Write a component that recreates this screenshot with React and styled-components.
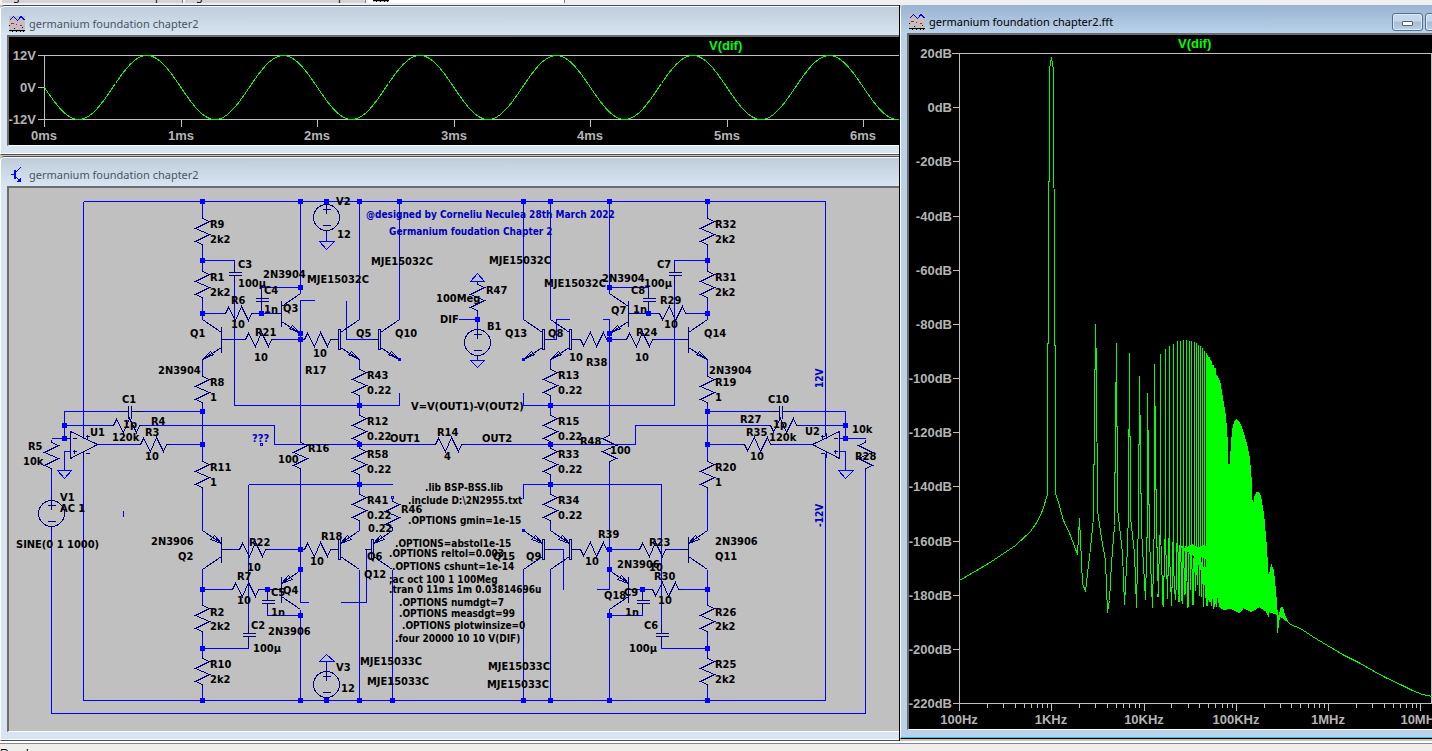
import styled, { createGlobalStyle } from 'styled-components'

const GlobalStyle = createGlobalStyle`
    * {
        box-sizing: border-box;
    }

    body {
        margin: 0;
        background: #f0f0f0;
        font-family: 'Noto Sans', 'Open Sans', sans-serif;
        font-size: 11px;
    }
`

const Screen = styled.div`
    height: 100vh;
    display: flex;
    flex-direction: column;
    overflow: hidden;
`

const TabStrip = styled.nav`
    height: 5px;
    flex: none;
    display: flex;
    align-items: flex-end;
    gap: 2px;
    padding: 0 0 2px 2px;
    overflow: hidden;
    background: #f0f0f0;
`

const Tab = styled.button`
    width: ${(props) => (props.$active ? '197px' : '181px')};
    height: 20px;
    flex: none;
    display: flex;
    align-items: flex-end;
    gap: 6px;
    padding: 0 5px 1px;
    border: 0;
    border-right: 1px solid #808088;
    background: ${(props) => (props.$active ? '#fff' : '#d4d4d4')};
    font: inherit;
    line-height: 12px;
    text-align: left;
    white-space: nowrap;
`

const Desktop = styled.main`
    flex: 1;
    min-height: 0;
    display: grid;
    grid-template-columns: minmax(0, 900fr) minmax(0, 532fr);
    background: #c8c4bc;
`

const Column = styled.div`
    min-width: 0;
    min-height: 0;
    display: flex;
    flex-direction: column;
    gap: 1px;
    border-right: 1px solid #000;
`

const Window = styled.section`
    flex: ${(props) => (props.$grow ? '1' : 'none')};
    min-height: 0;
    display: flex;
    flex-direction: column;
    padding: 0 0 8px 6px;
    background: #d7e4f2;
    border-top: 1px solid #4c4c54;
    border-left: 1px solid #fff;
    border-bottom: 1px solid #4c4c4c;
    border-top-left-radius: 5px;
    box-shadow: inset 0 -1px 0 #fff;
`

const FrontWindow = styled(Window)`
    margin-bottom: 2px;
    background: #b9d1ea;
    border-top: 0;
    border-bottom-color: #000;
    box-shadow: inset 0 -1px 0 #38c0dc;
`

const TitleBar = styled.header`
    height: ${(props) => (props.$front ? '28px' : '29px')};
    flex: none;
    display: flex;
    align-items: center;
    gap: 4px;
    margin-left: -6px;
    padding: 5px 0 0 8px;
    overflow: hidden;
    color: ${(props) => (props.$front ? '#000' : '#4b5563')};
    background: ${(props) =>
        props.$front
            ? 'linear-gradient(#99b4d1, #b9d1ea)'
            : 'linear-gradient(#bfcddb, #d7e4f1)'};
    border-top: ${(props) => (props.$front ? '0' : '1px solid #f4f8fc')};
    border-top-left-radius: 4px;

    & svg {
        flex: none;
    }
`

const Title = styled.h1`
    flex: 1;
    margin: 0;
    font-size: 11px;
    font-weight: 400;
    line-height: 16px;
    white-space: nowrap;
`

const Controls = styled.div`
    display: flex;
    gap: 2px;
    width: 40px;
    overflow: hidden;
`

const ControlButton = styled.button`
    width: 31px;
    height: 18px;
    flex: none;
    display: flex;
    align-items: flex-end;
    justify-content: center;
    padding: 0 0 4px;
    border: 1px solid #566f8c;
    border-radius: 3px;
    background: linear-gradient(#c5d7ea 45%, #a3bbd4 50%, #b9d0e8);
    box-shadow: inset 0 0 0 1px #dbe8f5;
`

const MinimizeMark = styled.span`
    width: 11px;
    height: 5px;
    border: 1px solid #555c70;
    border-radius: 1px;
    background: #fff;
`

const Client = styled.div`
    flex: 1;
    min-height: 0;
    overflow: hidden;
    background: ${(props) => props.$color};
    border: 2px solid #6c6c6c;
    border-width: 2px 0 1px 2px;
    border-bottom-color: #fff;

    & svg {
        display: block;
    }
`

const StatusBar = styled.footer`
    height: 10px;
    flex: none;
    overflow: hidden;
    background: #f0eded;
    border-top: 2px solid #fff;
    font-family: 'Liberation Sans', sans-serif;
    font-size: 12px;
    line-height: 16px;
`

const StatusText = styled.span`
    display: block;
    padding-top: 2px;
    border-top: 1px solid #888;
`

const PlotSvg = styled.svg`
    font-family: 'Liberation Sans', Arial, sans-serif;
    font-size: 13px;
    font-weight: 700;
`

const Axis = styled.path`
    fill: none;
    stroke: #c0c0c0;
    shape-rendering: crispEdges;
`

const Trace = styled.path`
    fill: ${(props) => (props.$solid ? '#0f0' : 'none')};
    stroke: #0f0;
    shape-rendering: crispEdges;
`

const AxisText = styled.text`
    fill: #b4b4b4;
    text-anchor: ${(props) => props.$anchor};
`

const TraceName = styled.text`
    fill: #0f0;
`

const SchematicSvg = styled.svg`
    font-family: 'DejaVu Sans Condensed', 'DejaVu Sans', sans-serif;
    font-weight: 700;
`

const Wires = styled.path`
    fill: none;
    stroke: #00f;
    shape-rendering: crispEdges;
`

const Symbols = styled.g`
    fill: none;
    stroke: #000080;
    shape-rendering: crispEdges;
`

const Junction = styled.rect`
    fill: #00f;
`

const OpenEnd = styled.rect`
    fill: none;
    stroke: #00f;
    shape-rendering: crispEdges;
`

const Label = styled.text`
    font-size: ${(props) => (props.$small ? '10px' : '11px')};
    fill: ${(props) => (props.$blue ? '#0000c0' : '#000')};
`

const TITLE = 'germanium foundation chapter2'

/* ---------- icons ---------- */

function PlotIcon() {
    return (
        <svg width="16" height="16" viewBox="0 0 16 16" shapeRendering="crispEdges">
            <rect width="16" height="16" fill="#c0c0c0" />
            <path d="M0.5 4.5L1.5 3.5L4.5 0.5L8.5 4.5L12 0.5L15.5 4" fill="none" stroke="#00f" />
            <path d="M2 7.5h3M7 8.5h1M11 9.5h2" stroke="#f00" />
            <path d="M0 9.5h1M5 12.5h1M13 11.5h1M0 14.5h16M3 15.5h1M7 15.5h1M11 15.5h1M14 15.5h1" stroke="#000" />
        </svg>
    )
}

function TransistorIcon() {
    return (
        <svg width="16" height="16" viewBox="0 0 16 16" shapeRendering="crispEdges">
            <path d="M2 7.5h4M11.5 0.5L6.5 5.5M6.5 9.5L12 15" fill="none" stroke="#00f" />
            <rect x="5" y="3" width="2" height="9" fill="#00f" />
            <path d="M12 10v5h-4z" fill="#00f" />
        </svg>
    )
}

/* ---------- time plot ---------- */

const PERIOD = 136.5

const sinePath = Array.from({ length: 856 }, (_, i) => {
    const y = 87 - 32 * Math.sin((-2 * Math.PI * i) / PERIOD)
    return `${i ? 'L' : 'M'}${44 + i} ${y.toFixed(1)}`
}).join('')

function TimePlot() {
    const times = [0, 1, 2, 3, 4, 5, 6]
    return (
        <PlotSvg width="890" height="108" viewBox="9 37 890 108">
            <g transform="translate(.5 .5)">
                <Axis
                    d={
                        'M37 55H910M37 87H44M37 119H910M44 55V119' +
                        times.map((t) => `M${Math.round(44 + t * PERIOD)} 119v7`).join('')
                    }
                />
                <Trace d={sinePath} />
            </g>
            <AxisText x="36" y="60" $anchor="end">12V</AxisText>
            <AxisText x="36" y="92" $anchor="end">0V</AxisText>
            <AxisText x="36" y="124" $anchor="end">-12V</AxisText>
            {times.map((t) => (
                <AxisText key={t} x={Math.round(44 + t * PERIOD)} y="140" $anchor="middle">
                    {t}ms
                </AxisText>
            ))}
            <TraceName x="709" y="50">V(dif)</TraceName>
        </PlotSvg>
    )
}

/* ---------- spectrum ---------- */

const freqX = (khz) => 959 + 92.3 * Math.log10(khz * 10)

const lowBand =
    'M959 580L988 563L1003 553L1015 545L1030 531L1037 521L1042 510L1047 494V388L1048 300L1049 69L1051 57' +
    'L1053 70L1054 300L1055 388V493L1058 502L1063 520L1070 535L1077 554L1079 518L1082 583L1085 591L1087 573' +
    'L1090 548L1093 517L1094 415L1095 324L1096 370L1097 510L1101 538L1105 560L1107 612L1109 600L1111 563' +
    'L1114 525L1115 423L1116 343L1117 508L1122 553L1124 604L1127 547L1128 510L1129 353L1130 517L1134 553' +
    'L1136 607L1138 517L1139 376L1141 530L1145 599L1147 517V393L1149 540L1152 607L1154 517V364L1156 530L1158 597'

const peaks = [
    [1154, 364], [1160, 353], [1165, 348], [1170, 344], [1174, 342], [1177, 340],
    [1184, 339], [1190, 340], [1196, 342], [1202, 347], [1206, 352], [1210, 359],
    [1215, 368], [1219, 380],
]

const floors = [597, 607, 598, 606, 600, 602, 604, 594, 607, 590, 605, 591, 585, 596]

const peakAt = (x) => {
    const i = Math.max(1, peaks.findIndex((p) => p[0] >= x))
    const [x0, y0] = peaks[i - 1]
    const [x1, y1] = peaks[i]
    return y0 + ((y1 - y0) * (x - x0)) / (x1 - x0)
}

const odds = Array.from({ length: 20 }, (_, i) => 15 + i * 2)

const comb = odds
    .map((n, i) => {
        const x = Math.round(freqX(n))
        const floor = floors[i % floors.length]
        const gap = Math.round((freqX(n + 1) - freqX(n)) * 10) / 10
        return `M${x - gap} ${floor}L${x} 520V${Math.round(peakAt(x))}V${530 + (i % 4) * 12}L${x + gap} ${floors[(i + 1) % floors.length]}`
    })
    .join('')

const solidBand =
    'M1208 570L1208 357L1209 357V545H1210V361H1211V550H1212V365H1213V450H1214V368H1215V460H1216V375' +
    'L1219 380L1222 397L1225 415L1227 443L1228 483L1230 457L1232 430L1234 421L1236 419L1239 422L1242 430' +
    'L1246 443L1249 458L1251 483L1252 516L1254 497L1256 492L1258 492L1260 496L1263 513L1266 547L1268 582' +
    'L1270 568L1271 565L1273 570L1275 590L1277 616V632L1279 616L1280 608L1282 607L1284 614L1287 621' +
    'L1283 618L1277 614L1268 611V616L1266 611L1259 606L1251 611L1243 607L1239 612L1231 608L1223 609L1219 606' +
    'L1217 590L1216 606L1215 600L1213 608V580L1211 605L1209 590Z'

const tail =
    'M1287 621L1290 624L1300 628L1312 636L1327 645L1344 655L1358 662L1372 670L1385 677L1402 685L1412 690L1422 694L1432 696'

const minorTicks = () => {
    let d = ''
    for (let decade = 0; decade < 5; decade++) {
        for (let k = 1; k < 10; k++) {
            const x = Math.round(959 + 92.3 * (decade + Math.log10(k)))
            d += `M${x} 703v${k === 1 ? 7 : 4}`
        }
    }
    return d + 'M1420 703v7'
}

function SpectrumPlot() {
    const levels = Array.from({ length: 13 }, (_, i) => 20 - i * 20)
    const levelY = (db) => Math.round(53 + ((20 - db) * 650) / 240)
    const freqs = ['100Hz', '1KHz', '10KHz', '100KHz', '1MHz', '10MHz']
    return (
        <PlotSvg width="523" height="694" viewBox="909 35 523 694">
            <g transform="translate(.5 .5)">
                <Axis
                    d={
                        'M951 53H1431V703H959V53' +
                        levels.map((db) => `M952 ${levelY(db)}h7`).join('') +
                        minorTicks()
                    }
                />
                <Trace d={lowBand} />
                <Trace d={comb} />
                <Trace d="M1180 545L1185 549L1191 544L1198 547L1204 545L1208 550V560L1202 556L1196 558L1190 552L1184 550Z" $solid />
                <Trace d={solidBand} $solid />
                <Trace d={tail} />
            </g>
            {levels.map((db) => (
                <AxisText key={db} x="952" y={levelY(db) + 5} $anchor="end">
                    {db}dB
                </AxisText>
            ))}
            {freqs.map((f, i) => (
                <AxisText key={f} x={Math.round(959 + i * 92.3)} y="724" $anchor="middle">
                    {f}
                </AxisText>
            ))}
            <TraceName x="1178" y="48">V(dif)</TraceName>
        </PlotSvg>
    )
}

/* ---------- schematic symbols ---------- */

// zigzag runs top to bottom, f = -1 mirrors it
function ResistorV({ x, y, f = 1 }) {
    return (
        <path
            d={`M${x} ${y - 16}V${y - 13}L${x + 7 * f} ${y - 10}L${x - 7 * f} ${y - 3}L${x + 7 * f} ${y + 3}L${x - 7 * f} ${y + 10}L${x} ${y + 13}V${y + 16}`}
        />
    )
}

function ResistorH({ x, y, f = 1 }) {
    return (
        <path
            d={`M${x - 16} ${y}H${x - 13}L${x - 10} ${y - 6 * f}L${x - 3} ${y + 7 * f}L${x + 3} ${y - 7 * f}L${x + 10} ${y + 7 * f}L${x + 13} ${y}H${x + 16}`}
        />
    )
}

function CapacitorV({ x, y }) {
    return (
        <path
            d={`M${x} ${y - 10}V${y - 1}M${x - 6} ${y - 1}H${x + 7}M${x - 6} ${y + 2}H${x + 7}M${x} ${y + 2}V${y + 11}`}
        />
    )
}

function CapacitorH({ x, y }) {
    return (
        <path
            d={`M${x - 12} ${y}H${x - 1}M${x - 1} ${y - 6}V${y + 7}M${x + 2} ${y - 6}V${y + 7}M${x + 2} ${y}H${x + 13}`}
        />
    )
}

// x is the collector/emitter column, d the side the base is on
function Transistor({ x, y, d, pnp, power }) {
    const bar = x + 19 * d
    const outer = x + 21 * d
    const arrow = pnp
        ? `M${bar} ${y - 6}L${bar - 7 * d} ${y - 14}L${bar - 11 * d} ${y - 10}Z`
        : `M${x} ${y + 20}L${x + 8 * d} ${y + 12}L${x + 11 * d} ${y + 15}Z`
    const slants = pnp
        ? `M${x} ${y - 19}L${bar} ${y - 6}M${bar} ${y + 7}L${x} ${y + 20}`
        : `M${x} ${y - 20}L${bar} ${y - 7}M${bar} ${y + 8}L${x} ${y + 20}`
    return (
        <>
            {power ? (
                <rect x={Math.min(bar, outer)} y={y - 10} width="2" height="20" />
            ) : (
                <path d={`M${bar} ${y - 13}V${y + 13}`} />
            )}
            <path d={`${slants}M${power ? outer : bar} ${y}H${x + 28 * d}${arrow}`} />
        </>
    )
}

function Source({ x, y }) {
    return (
        <>
            <circle cx={x} cy={y} r="13" />
            <path
                d={`M${x} ${y - 16}V${y - 4}M${x - 4} ${y - 8}H${x + 4}M${x - 4} ${y + 8}H${x + 4}M${x} ${y + 13}V${y + 16}`}
            />
        </>
    )
}

function OpAmp({ x, d }) {
    const sx = x + 17 * d
    return (
        <path
            d={
                `M${x} 431L${x + 27 * d} 444L${x} 458Z` +
                `M${x + 2 * d} 438h${4 * d}M${x + 2 * d} 451h${4 * d}M${x + 4 * d} 449v4` +
                `M${sx - 2} 436h4M${sx} 434v4M${sx - 2} 453h4M${x + 13 * d} 432v6M${x + 13 * d} 451v6`
            }
        />
    )
}

/* ---------- schematic data ---------- */

const wires = [
    // rails
    'M83 201H825M83 700H825M83 201V435M83 453V700M825 201V435M825 453V700M51 713H865',
    // input stage, left
    'M202 201V215M202 247V268M202 300V319M202 359V373M202 405V458M202 490V530M202 569V602M202 634V655M202 687V700',
    'M202 260H234V264M234 283V405H399V392M202 313H222M254 313H275M261 303V287H300M228 339H242M274 339H301',
    'M300 201V293M300 333V439M300 339V300H314M346 300V339H372M359 201V319M399 201V319M359 359V366',
    'M359 398V412M359 477V491M359 523V530M300 471V602H308M300 609V700M248 484H392M248 484V625M248 644V648H202',
    'M228 549H236M268 549H301M202 589H229M261 589H275M267 612V615H300M359 569V700M392 569V700M366 549V602H340',
    // feedback and source, left
    'M64 438V411H118M142 411H202M64 425H110M142 425H274V444H432M51 438H70M64 470V451H70M97 444H137M169 444H202',
    'M51 471V497M51 529V713',
    'M64 470H57L64 478L71 470H64',
    // centre
    'M464 444H635V425H767M458 319H477M477 313V326M477 281H470L477 273L484 281H477',
    'M477 358V360M477 360H470L477 367L484 360H477M326 233V241M326 241H319L326 249L334 241H326',
    'M326 668V661M326 661H319L326 654L334 661H326',
    // right half
    'M523 201V319M550 201V319M551 339H556V319H569M602 319H609V339M609 201V293M609 287H648V290M609 333V432',
    'M609 464V589H596M609 609V700M550 359V366M550 398V412M550 477V491M550 523V530M523 392V405H674V283M674 264V260H707',
    'M637 313H656M688 313H707M609 339H623M655 339H679M523 498V484H661V625M661 644V648H707M551 549H563V589',
    'M523 569V700M550 569V700M609 549H636M668 549H679M637 589H649M681 589H707M642 612V615H609',
    'M707 201V215M707 247V268M707 300V319M707 359V373M707 405V458M707 490V530M707 569V602M707 634V655M707 687V700',
    'M707 411H768M792 411H845V438M799 425H845M707 444H741M773 444H813M839 438H865M839 451H845V470',
    'M845 470H838L845 478L853 470H845M865 471V713M123 510V516',
].join('')

const verticals = [
    ...[231, 284, 389, 474, 618, 671].flatMap((y) => [[202, y], [707, y]]),
    ...[382, 428, 461, 507].flatMap((y) => [[359, y], [550, y]]),
    [300, 455], [392, 514], [477, 297], [51, 455], [609, 448, -1], [865, 455, -1],
]

const horizontals = [
    [238, 313], [258, 339], [317, 339], [317, 549], [252, 549], [245, 589],
    [126, 425], [153, 444], [448, 444], [639, 339], [652, 549],
    [593, 339, -1], [672, 313, -1], [593, 549, -1], [665, 589, -1], [783, 425, -1], [757, 444, -1],
]

const capacitors = [
    [234, 273], [261, 299], [267, 601], [248, 634],
    [674, 273], [648, 299], [642, 601], [661, 634],
]

const transistors = [
    { x: 202, y: 339, d: 1 },
    { x: 300, y: 313, d: -1 },
    { x: 359, y: 339, d: -1, power: true },
    { x: 399, y: 339, d: -1, power: true },
    { x: 202, y: 549, d: 1, pnp: true },
    { x: 300, y: 589, d: -1, pnp: true },
    { x: 359, y: 549, d: -1, pnp: true, power: true },
    { x: 392, y: 549, d: -1, pnp: true, power: true },
    { x: 523, y: 339, d: 1, power: true },
    { x: 550, y: 339, d: 1, power: true },
    { x: 609, y: 313, d: 1 },
    { x: 707, y: 339, d: -1 },
    { x: 523, y: 549, d: 1, pnp: true, power: true },
    { x: 550, y: 549, d: 1, pnp: true, power: true },
    { x: 609, y: 589, d: 1, pnp: true },
    { x: 707, y: 549, d: -1, pnp: true },
]

const junctions = [
    ...[202, 300, 326, 359, 399, 523, 550, 609, 707].map((x) => [x, 201]),
    ...[202, 300, 326, 359, 392, 523, 550, 609, 707].map((x) => [x, 700]),
    ...[260, 313, 411, 444, 589, 648].flatMap((y) => [[202, y], [707, y]]),
    ...[287, 333, 339, 549, 569, 615].flatMap((y) => [[300, y], [609, y]]),
    ...[405, 444, 484].flatMap((y) => [[359, y], [550, y]]),
    [261, 313], [267, 589], [648, 313], [642, 589],
    [64, 425], [64, 438], [845, 425], [845, 438], [477, 319],
]

const openEnds = [[399, 359], [523, 359], [392, 497], [523, 530], [261, 444]]

const labels = [
    [210, 228, 'R9'], [210, 243, '2k2'], [210, 281, 'R1'], [210, 296, '2k2'],
    [210, 386, 'R8'], [210, 401, '1'], [210, 471, 'R11'], [210, 486, '1'],
    [210, 616, 'R2'], [210, 630, '2k2'], [210, 668, 'R10'], [210, 683, '2k2'],
    [190, 337, 'Q1'], [158, 374, '2N3904'], [151, 545, '2N3906'], [178, 560, 'Q2'],
    [238, 268, 'C3'], [238, 287, '100µ'], [231, 304, 'R6'], [231, 328, '10'],
    [263, 278, '2N3904'], [264, 294, 'C4'], [264, 313, '1n'], [283, 312, 'Q3'],
    [255, 336, 'R21'], [254, 361, '10'], [313, 357, '10'], [305, 374, 'R17'],
    [307, 283, 'MJE15032C'], [371, 265, 'MJE15032C'], [356, 337, 'Q5'], [395, 337, 'Q10'],
    [336, 205, 'V2'], [337, 238, '12'], [367, 379, 'R43'], [367, 394, '0.22'],
    [367, 425, 'R12'], [367, 440, '0.22'], [367, 458, 'R58'], [367, 473, '0.22'],
    [367, 504, 'R41'], [367, 519, '0.22'], [368, 532, '0.22'], [401, 513, 'R46'],
    [390, 442, 'OUT1'], [437, 436, 'R14'], [444, 460, '4'], [482, 442, 'OUT2'],
    [308, 452, 'R16'], [278, 463, '100'], [367, 560, 'Q6'], [364, 578, 'Q12'],
    [321, 540, 'R18'], [310, 565, '10'], [249, 546, 'R22'], [247, 571, '10'],
    [237, 580, 'R7'], [237, 604, '10'], [283, 594, 'Q4'], [271, 596, 'C5'],
    [271, 616, '1n'], [251, 629, 'C2'], [253, 652, '100µ'], [268, 635, '2N3906'],
    [336, 671, 'V3'], [341, 692, '12'], [360, 665, 'MJE15033C'], [367, 685, 'MJE15033C'],
    [122, 403, 'C1'], [123, 428, '1p'], [151, 425, 'R4'], [112, 441, '120k'],
    [145, 436, 'R3'], [145, 460, '10'], [90, 436, 'U1'], [28, 450, 'R5'],
    [23, 465, '10k'], [60, 501, 'V1'], [60, 512, 'AC 1'], [16, 548, 'SINE(0 1 1000)'],
    [486, 294, 'R47'], [436, 302, '100Meg'], [440, 323, 'DIF'], [487, 330, 'B1'],
    [411, 410, 'V=V(OUT1)-V(OUT2)'], [489, 264, 'MJE15032C'], [544, 287, 'MJE15032C'],
    [505, 337, 'Q13'], [548, 337, 'Q8'], [586, 366, 'R38'], [569, 361, '10'],
    [602, 282, '2N3904'], [644, 287, '100µ'], [631, 294, 'C8'], [633, 313, '1n'],
    [657, 268, 'C7'], [611, 314, 'Q7'], [660, 304, 'R29'], [664, 328, '10'],
    [636, 336, 'R24'], [635, 361, '10'], [558, 379, 'R13'], [558, 394, '0.22'],
    [558, 425, 'R15'], [558, 440, '0.22'], [558, 458, 'R33'], [558, 473, '0.22'],
    [558, 504, 'R34'], [558, 519, '0.22'], [580, 445, 'R48'], [610, 454, '100'],
    [715, 228, 'R32'], [715, 243, '2k2'], [715, 281, 'R31'], [715, 296, '2k2'],
    [704, 337, 'Q14'], [709, 374, '2N3904'], [715, 386, 'R19'], [715, 401, '1'],
    [715, 471, 'R20'], [715, 486, '1'], [715, 545, '2N3906'], [715, 560, 'Q11'],
    [715, 616, 'R26'], [715, 630, '2k2'], [715, 668, 'R25'], [715, 683, '2k2'],
    [768, 403, 'C10'], [773, 428, '1p'], [740, 423, 'R27'], [769, 441, '120k'],
    [746, 436, 'R35'], [750, 460, '10'], [805, 435, 'U2'], [852, 433, '10k'],
    [855, 460, 'R28'], [598, 538, 'R39'], [585, 565, '10'], [649, 546, 'R23'],
    [649, 571, '10'], [617, 568, '2N3906'], [604, 599, 'Q18'], [624, 596, 'C9'],
    [625, 616, '1n'], [654, 580, 'R30'], [658, 604, '10'], [644, 629, 'C6'],
    [629, 652, '100µ'], [493, 560, 'Q15'], [526, 560, 'Q9'], [488, 670, 'MJE15033C'],
    [487, 688, 'MJE15033C'],
]

const directives = [
    [425, 491, '.lib BSP-BSS.lib'],
    [408, 504, '.include D:\\2N2955.txt'],
    [408, 524, '.OPTIONS gmin=1e-15'],
    [395, 547, '.OPTIONS=abstol1e-15'],
    [389, 557, '.OPTIONS reltol=0.003'],
    [392, 570, '.OPTIONS cshunt=1e-14'],
    [389, 583, ';ac oct 100 1 100Meg'],
    [389, 593, '.tran 0 11ms 1m 0.03814696u'],
    [399, 606, '.OPTIONS numdgt=7'],
    [399, 617, '.OPTIONS measdgt=99'],
    [402, 629, '.OPTIONS plotwinsize=0'],
    [395, 642, '.four 20000 10 10 V(DIF)'],
]

function Schematic() {
    return (
        <SchematicSvg width="890" height="543" viewBox="9 188 890 543">
            <g transform="translate(.5 .5)">
                <Wires d={wires} />
                <Symbols>
                    {verticals.map(([x, y, f]) => (
                        <ResistorV key={`${x}-${y}`} x={x} y={y} f={f} />
                    ))}
                    {horizontals.map(([x, y, f]) => (
                        <ResistorH key={`${x}-${y}`} x={x} y={y} f={f} />
                    ))}
                    {capacitors.map(([x, y]) => (
                        <CapacitorV key={`${x}-${y}`} x={x} y={y} />
                    ))}
                    <CapacitorH x={129} y={411} />
                    <CapacitorH x={780} y={411} />
                    {transistors.map((t) => (
                        <Transistor key={`${t.x}-${t.y}`} {...t} />
                    ))}
                    <Source x={326} y={217} />
                    <Source x={326} y={684} />
                    <Source x={477} y={342} />
                    <Source x={51} y={513} />
                    <OpAmp x={70} d={1} />
                    <OpAmp x={839} d={-1} />
                </Symbols>
                {openEnds.map(([x, y]) => (
                    <OpenEnd key={`${x}-${y}`} x={x - 1} y={y - 1} width="2" height="2" />
                ))}
            </g>
            {junctions.map(([x, y]) => (
                <Junction key={`${x}-${y}`} x={x - 2} y={y - 2} width="5" height="5" />
            ))}
            {labels.map(([x, y, text]) => (
                <Label key={`${x}-${y}`} x={x} y={y}>
                    {text}
                </Label>
            ))}
            {directives.map(([x, y, text]) => (
                <Label key={text} x={x} y={y} $small>
                    {text}
                </Label>
            ))}
            <Label x="366" y="218" $blue $small>@designed by Corneliu Neculea 28th March 2022</Label>
            <Label x="389" y="235" $blue $small>Germanium foudation Chapter 2</Label>
            <Label x="252" y="442" $blue>???</Label>
            <Label transform="translate(823 388) rotate(-90)" $blue $small>12V</Label>
            <Label transform="translate(823 527) rotate(-90)" $blue $small>-12V</Label>
        </SchematicSvg>
    )
}

function App() {
    return (
        <Screen>
            <GlobalStyle />
            <TabStrip>
                <Tab><PlotIcon />{TITLE}</Tab>
                <Tab><TransistorIcon />{TITLE}</Tab>
                <Tab $active><PlotIcon /></Tab>
            </TabStrip>
            <Desktop>
                <Column>
                    <Window>
                        <TitleBar>
                            <PlotIcon />
                            <Title>{TITLE}</Title>
                        </TitleBar>
                        <Client $color="#000">
                            <TimePlot />
                        </Client>
                    </Window>
                    <Window $grow>
                        <TitleBar>
                            <TransistorIcon />
                            <Title>{TITLE}</Title>
                        </TitleBar>
                        <Client $color="#c0c0c0">
                            <Schematic />
                        </Client>
                    </Window>
                </Column>
                <FrontWindow $grow>
                    <TitleBar $front>
                        <PlotIcon />
                        <Title>{TITLE}.fft</Title>
                        <Controls>
                            <ControlButton aria-label="Minimize">
                                <MinimizeMark />
                            </ControlButton>
                            <ControlButton aria-label="Maximize" />
                        </Controls>
                    </TitleBar>
                    <Client $color="#000">
                        <SpectrumPlot />
                    </Client>
                </FrontWindow>
            </Desktop>
            <StatusBar>
                <StatusText>Ready</StatusText>
            </StatusBar>
        </Screen>
    )
}

export default App
